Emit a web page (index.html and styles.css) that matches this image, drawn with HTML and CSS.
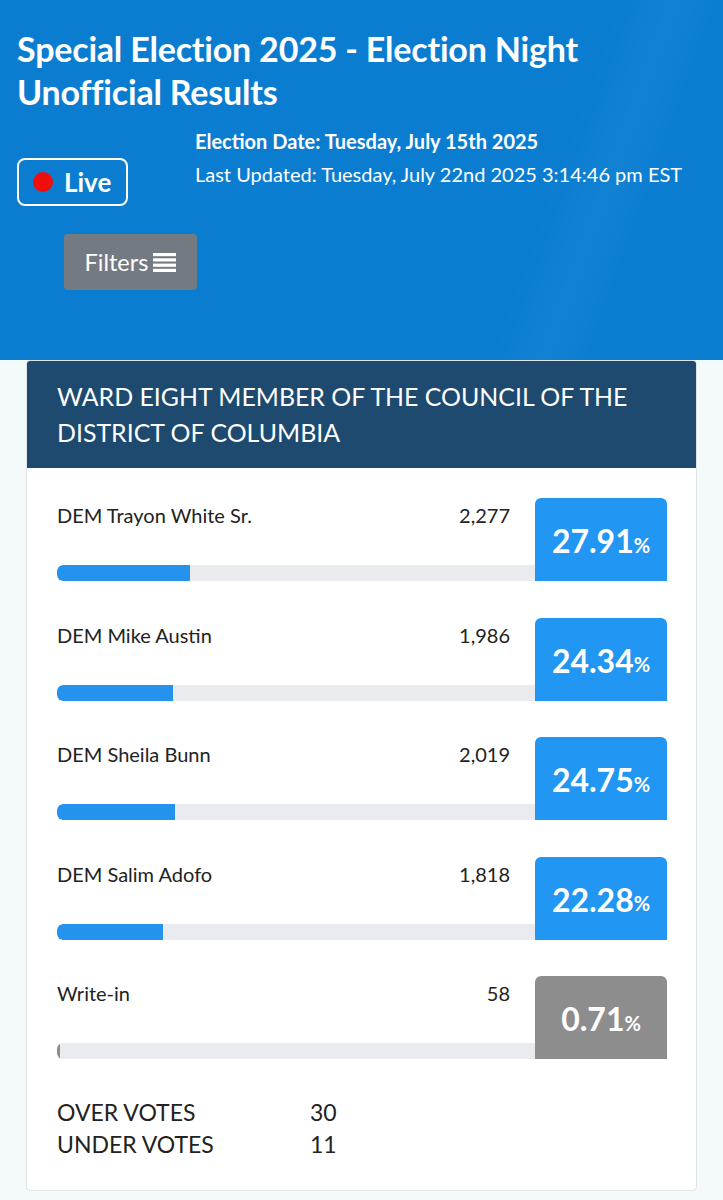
FILE: index.html
```html
<!DOCTYPE html>
<html lang="en">
<head>
<meta charset="utf-8">
<title>Special Election 2025 - Election Night Unofficial Results</title>
<link rel="stylesheet" href="styles.css">
</head>
<body>
<header class="hero">
  <h1 class="title">Special Election 2025 - Election Night Unofficial Results</h1>
  <div class="meta">
    <div class="live"><span class="dot"></span><span>Live</span></div>
    <div class="info">
      <div class="date">Election Date: Tuesday, July 15th 2025</div>
      <div class="updated">Last Updated: Tuesday, July 22nd 2025 3:14:46 pm EST</div>
    </div>
  </div>
  <button class="filters">Filters
    <svg class="bars" width="23" height="19" viewBox="0 0 23 19"><rect x="0" y="0" width="23" height="3.2" fill="#fff"/><rect x="0" y="5.3" width="23" height="3.2" fill="#fff"/><rect x="0" y="10.6" width="23" height="3.2" fill="#fff"/><rect x="0" y="15.8" width="23" height="3.2" fill="#fff"/></svg>
  </button>
</header>
<main class="card">
  <div class="card-head">WARD EIGHT MEMBER OF THE COUNCIL OF THE DISTRICT OF COLUMBIA</div>
  <div class="card-body">
    <div class="row">
      <div class="left">
        <div class="line"><span class="name">DEM Trayon White Sr.</span><span class="votes">2,277</span></div>
        <div class="track"><div class="fill" style="width:27.91%"></div></div>
      </div>
      <div class="pct">27.91<small>%</small></div>
    </div>
    <div class="row">
      <div class="left">
        <div class="line"><span class="name">DEM Mike Austin</span><span class="votes">1,986</span></div>
        <div class="track"><div class="fill" style="width:24.34%"></div></div>
      </div>
      <div class="pct">24.34<small>%</small></div>
    </div>
    <div class="row">
      <div class="left">
        <div class="line"><span class="name">DEM Sheila Bunn</span><span class="votes">2,019</span></div>
        <div class="track"><div class="fill" style="width:24.75%"></div></div>
      </div>
      <div class="pct">24.75<small>%</small></div>
    </div>
    <div class="row">
      <div class="left">
        <div class="line"><span class="name">DEM Salim Adofo</span><span class="votes">1,818</span></div>
        <div class="track"><div class="fill" style="width:22.28%"></div></div>
      </div>
      <div class="pct">22.28<small>%</small></div>
    </div>
    <div class="row">
      <div class="left">
        <div class="line"><span class="name">Write-in</span><span class="votes">58</span></div>
        <div class="track"><div class="fill gray" style="width:0.71%"></div></div>
      </div>
      <div class="pct gray">0.71<small>%</small></div>
    </div>
    <div class="totals">
      <div class="trow"><span class="tlabel">OVER VOTES</span><span>30</span></div>
      <div class="trow"><span class="tlabel">UNDER VOTES</span><span>11</span></div>
    </div>
  </div>
</main>
</body>
</html>
```

FILE: styles.css
```css
* { box-sizing: border-box; }
html, body { margin: 0; padding: 0; }
body {
  background: #f4f9f9;
  font-family: Lato, "Open Sans", "Liberation Sans", sans-serif;
  color: #222;
  padding-bottom: 10px;
}
.hero {
  height: 360px;
  padding: 27px 17px 0;
  color: #fff;
  background:
    linear-gradient(110deg, rgba(255,255,255,0) 72%, rgba(255,255,255,0.03) 79%, rgba(255,255,255,0) 86%),
    #0a7dd1;
}
.title {
  margin: 0;
  font-size: 34px;
  font-weight: 700;
  line-height: 43px;
  letter-spacing: -0.2px;
}
.meta {
  display: flex;
  align-items: flex-start;
  gap: 67px;
  margin-top: 12px;
}
.live {
  margin-top: 33px;
  width: 111px;
  height: 48px;
  border: 2px solid #fff;
  border-radius: 8px;
  display: flex;
  align-items: center;
  padding-left: 14px;
  gap: 11px;
  font-size: 26px;
  font-weight: 700;
}
.dot {
  width: 20px;
  height: 20px;
  border-radius: 50%;
  background: #f20d0d;
}
.info { font-size: 20px; line-height: 33px; }
.date { font-weight: 700; }
.filters {
  margin: 28px 0 0 47px;
  width: 133px;
  height: 56px;
  border: none;
  border-radius: 4px;
  background: #747a81;
  color: #fff;
  font-family: inherit;
  font-size: 23.5px;
  display: flex;
  align-items: center;
  justify-content: center;
  gap: 5px;
  padding: 0;
}
.bars { display: block; }
.card {
  margin: 0 26px;
  background: #fff;
  border: 1px solid #dfe4e7;
  border-radius: 4px;
  overflow: hidden;
}
.card-head {
  background: #1d4a6e;
  color: #fff;
  font-size: 24.9px;
  font-weight: 400;
  line-height: 36px;
  padding: 17px 40px 18px 30px;
}
.card-body { padding: 30px 29px 30px 30px; }
.row {
  display: grid;
  grid-template-columns: 1fr 132px;
  height: 83px;
  margin-bottom: 36.5px;
}
.left {
  display: flex;
  flex-direction: column;
  justify-content: space-between;
}
.line {
  display: flex;
  justify-content: space-between;
  padding: 5px 25px 0 0;
  font-size: 20px;
  line-height: 24px;
}
.track {
  height: 16px;
  background: #e9ebee;
  border-radius: 6px 0 0 6px;
  overflow: hidden;
}
.fill {
  height: 100%;
  background: #2592ee;
  border-radius: 6px 0 0 6px;
}
.fill.gray { background: #8e8e8e; }
.pct {
  background: #2196f3;
  color: #fff;
  border-radius: 6px 6px 0 0;
  display: flex;
  align-items: center;
  justify-content: center;
  font-size: 32px;
  font-weight: 700;
  padding-top: 2px;
}
.pct small { font-size: 20px; font-weight: 700; margin-top: 8px; }
.pct.gray { background: #8e8d8e; }
.totals { margin-top: 0.5px; font-size: 23px; line-height: 32px; }
.trow { display: flex; }
.tlabel { width: 253px; }
```
